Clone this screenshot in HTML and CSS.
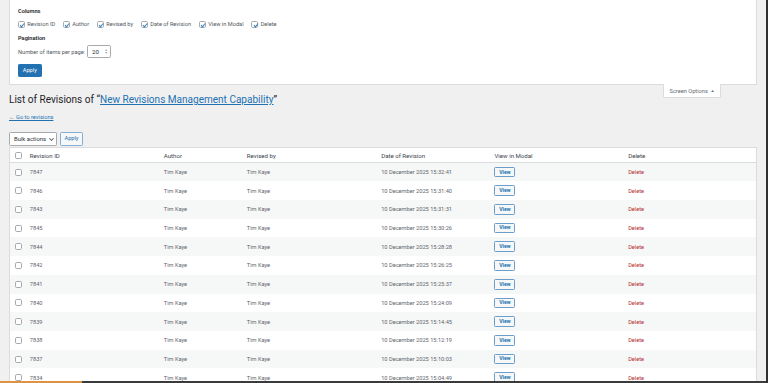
FILE: index.html
```html
<!DOCTYPE html>
<html lang="en">
<head>
<meta charset="utf-8">
<title>Revisions</title>
<link rel="stylesheet" href="styles.css">
</head>
<body>
<div class="frame">
  <div class="viewport">
    <div class="screen-meta">
      <div class="prefs-title">Columns</div>
      <div class="prefs-cols">
        <label class="pref"><span class="cb"><svg viewBox="0 0 20 20"><path d="M14.83 4.89l1.34.94-5.81 8.38H9.02L5.78 9.67l1.34-1.25 2.57 2.4z" fill="#3582c4"/></svg></span>Revision ID</label>
        <label class="pref"><span class="cb"><svg viewBox="0 0 20 20"><path d="M14.83 4.89l1.34.94-5.81 8.38H9.02L5.78 9.67l1.34-1.25 2.57 2.4z" fill="#3582c4"/></svg></span>Author</label>
        <label class="pref"><span class="cb"><svg viewBox="0 0 20 20"><path d="M14.83 4.89l1.34.94-5.81 8.38H9.02L5.78 9.67l1.34-1.25 2.57 2.4z" fill="#3582c4"/></svg></span>Revised by</label>
        <label class="pref"><span class="cb"><svg viewBox="0 0 20 20"><path d="M14.83 4.89l1.34.94-5.81 8.38H9.02L5.78 9.67l1.34-1.25 2.57 2.4z" fill="#3582c4"/></svg></span>Date of Revision</label>
        <label class="pref"><span class="cb"><svg viewBox="0 0 20 20"><path d="M14.83 4.89l1.34.94-5.81 8.38H9.02L5.78 9.67l1.34-1.25 2.57 2.4z" fill="#3582c4"/></svg></span>View in Modal</label>
        <label class="pref"><span class="cb"><svg viewBox="0 0 20 20"><path d="M14.83 4.89l1.34.94-5.81 8.38H9.02L5.78 9.67l1.34-1.25 2.57 2.4z" fill="#3582c4"/></svg></span>Delete</label>
      </div>
      <div class="prefs-title pag">Pagination</div>
      <div class="per-page">
        <span>Number of items per page:</span>
        <span class="num">20<svg class="spin" viewBox="0 0 10 16"><path d="M2.5 6.5L5 3l2.5 3.5z M2.5 9.5L5 13l2.5-3.5z" fill="#8a8a8a"/></svg></span>
      </div>
      <button class="btn btn-primary">Apply</button>
    </div>
    <div class="meta-links">
      <span class="show-settings">Screen Options<svg viewBox="0 0 8 5"><path d="M0 5L4 0l4 5z" fill="#787c82"/></svg></span>
    </div>
    <div class="wrap">
      <h1 class="title">List of Revisions of “<a href="#">New Revisions Management Capability</a>”</h1>
      <p class="back"><a href="#">← Go to revisions</a></p>
      <div class="tablenav">
        <span class="select">Bulk actions<svg viewBox="0 0 20 20"><path d="M5 6l5 5 5-5 2 1-7 7-7-7 2-1z" fill="#555"/></svg></span>
        <button class="btn btn-secondary">Apply</button>
      </div>
      <table class="list">
        <colgroup>
          <col class="c-check"><col class="c-id"><col class="c-author"><col class="c-rev"><col class="c-date"><col class="c-view"><col>
        </colgroup>
        <thead>
          <tr><th class="check-col"><span class="cb"></span></th><th>Revision ID</th><th>Author</th><th>Revised by</th><th>Date of Revision</th><th>View in Modal</th><th>Delete</th></tr>
        </thead>
        <tbody>
          <tr><td class="check-col"><span class="cb"></span></td><td>7847</td><td>Tim Kaye</td><td>Tim Kaye</td><td>10 December 2025 15:32:41</td><td><button class="btn btn-view">View</button></td><td><a class="del" href="#">Delete</a></td></tr>
          <tr><td class="check-col"><span class="cb"></span></td><td>7846</td><td>Tim Kaye</td><td>Tim Kaye</td><td>10 December 2025 15:31:40</td><td><button class="btn btn-view">View</button></td><td><a class="del" href="#">Delete</a></td></tr>
          <tr><td class="check-col"><span class="cb"></span></td><td>7843</td><td>Tim Kaye</td><td>Tim Kaye</td><td>10 December 2025 15:31:31</td><td><button class="btn btn-view">View</button></td><td><a class="del" href="#">Delete</a></td></tr>
          <tr><td class="check-col"><span class="cb"></span></td><td>7845</td><td>Tim Kaye</td><td>Tim Kaye</td><td>10 December 2025 15:30:26</td><td><button class="btn btn-view">View</button></td><td><a class="del" href="#">Delete</a></td></tr>
          <tr><td class="check-col"><span class="cb"></span></td><td>7844</td><td>Tim Kaye</td><td>Tim Kaye</td><td>10 December 2025 15:28:28</td><td><button class="btn btn-view">View</button></td><td><a class="del" href="#">Delete</a></td></tr>
          <tr><td class="check-col"><span class="cb"></span></td><td>7842</td><td>Tim Kaye</td><td>Tim Kaye</td><td>10 December 2025 15:26:25</td><td><button class="btn btn-view">View</button></td><td><a class="del" href="#">Delete</a></td></tr>
          <tr><td class="check-col"><span class="cb"></span></td><td>7841</td><td>Tim Kaye</td><td>Tim Kaye</td><td>10 December 2025 15:25:37</td><td><button class="btn btn-view">View</button></td><td><a class="del" href="#">Delete</a></td></tr>
          <tr><td class="check-col"><span class="cb"></span></td><td>7840</td><td>Tim Kaye</td><td>Tim Kaye</td><td>10 December 2025 15:24:09</td><td><button class="btn btn-view">View</button></td><td><a class="del" href="#">Delete</a></td></tr>
          <tr><td class="check-col"><span class="cb"></span></td><td>7839</td><td>Tim Kaye</td><td>Tim Kaye</td><td>10 December 2025 15:14:45</td><td><button class="btn btn-view">View</button></td><td><a class="del" href="#">Delete</a></td></tr>
          <tr><td class="check-col"><span class="cb"></span></td><td>7838</td><td>Tim Kaye</td><td>Tim Kaye</td><td>10 December 2025 15:12:19</td><td><button class="btn btn-view">View</button></td><td><a class="del" href="#">Delete</a></td></tr>
          <tr><td class="check-col"><span class="cb"></span></td><td>7837</td><td>Tim Kaye</td><td>Tim Kaye</td><td>10 December 2025 15:10:03</td><td><button class="btn btn-view">View</button></td><td><a class="del" href="#">Delete</a></td></tr>
          <tr><td class="check-col"><span class="cb"></span></td><td>7834</td><td>Tim Kaye</td><td>Tim Kaye</td><td>10 December 2025 15:04:49</td><td><button class="btn btn-view">View</button></td><td><a class="del" href="#">Delete</a></td></tr>
        </tbody>
      </table>
    </div>
  </div>
  <div class="taskbar"><span class="taskbar-progress"></span></div>
</div>
</body>
</html>
```
FILE: styles.css
```css
* { box-sizing: border-box; }
html, body { margin: 0; padding: 0; }
body {
  background: #f0f0f1;
  font-family: Roboto, "Noto Sans", "Liberation Sans", sans-serif;
  color: #3c434a;
}
button { margin: 0; font-family: inherit; cursor: pointer; }

.frame {
  width: 768px;
  height: 383px;
  display: flex;
  flex-direction: column;
  border-right: 2px solid #303030;
  overflow: hidden;
}
.viewport { flex: 1; min-height: 0; overflow: hidden; padding-left: 9px; }
.taskbar { flex: 0 0 2px; display: flex; background: #3a3a3a; }
.taskbar-progress { width: 82px; background: #e0923f; }

/* Screen options panel */
.screen-meta {
  height: 85px;
  margin-right: 9px;
  padding: 6.5px 8px 0;
  background: #fff;
  border: 1px solid #dcdcde;
  border-top: 0;
}
.prefs-title { font-size: 5.67px; font-weight: 600; line-height: 8.7px; color: #1d2327; }
.prefs-cols { display: flex; align-items: center; height: 13.1px; margin-top: 2.6px; }
.pref { display: flex; align-items: center; margin-right: 7.8px; font-size: 5.67px; color: #50575e; }
.cb {
  display: flex;
  flex: 0 0 7px;
  width: 7px;
  height: 7px;
  border: 1px solid #a7aaad;
  border-radius: 1.75px;
  background: #fff;
}
.pref .cb { margin-right: 2.3px; }
.cb svg { flex: 0 0 9.2px; width: 9.2px; height: 9.2px; margin: -1.3px 0 0 -1.75px; }
.pag { margin-top: 3px; }
.per-page { display: flex; align-items: center; height: 13.5px; margin-top: 2.4px; font-size: 5.67px; color: #50575e; }
.num {
  display: flex;
  align-items: center;
  width: 24.7px;
  height: 13.5px;
  margin-left: 1.7px;
  padding: 0 1.6px 0 4.3px;
  background: #fff;
  border: 1px solid #a7aaad;
  border-radius: 1.75px;
  font-size: 6.1px;
  color: #2c3338;
}
.spin { display: block; margin-left: auto; width: 4.4px; height: 7px; }

.btn {
  display: flex;
  align-items: center;
  justify-content: center;
  padding: 0;
  border-radius: 1.3px;
  font-size: 5.67px;
  line-height: 1;
}
.btn-primary {
  width: 23.6px;
  height: 13.1px;
  margin-top: 5.7px;
  background: #2271b1;
  border: 1px solid #2271b1;
  color: #fff;
}

/* Screen options tab */
.meta-links { float: right; margin: -1px 45px 0 0; }
.show-settings {
  display: flex;
  align-items: center;
  gap: 3.3px;
  height: 13.7px;
  padding: 1px 5.5px 0;
  background: #fff;
  border: 1px solid #dcdcde;
  border-top: 0;
  border-radius: 0 0 1.75px 1.75px;
  font-size: 5.67px;
  color: #646970;
}
.show-settings svg { width: 3.4px; height: 2.2px; }

/* Main */
.wrap { margin: 4.4px 9px 0 0; }
.title {
  margin: 0;
  padding: 3.9px 0 1.75px;
  font-size: 10.04px;
  font-weight: 400;
  line-height: 13.05px;
  color: #1d2327;
}
.title a { color: #2271b1; }
.back { margin: 5.2px 0 0; font-size: 5.67px; line-height: 8.3px; }
.back a { color: #2271b1; }

.tablenav { display: flex; align-items: center; gap: 3px; height: 13.6px; margin-top: 10.7px; }
.select {
  display: flex;
  align-items: center;
  width: 47.7px;
  height: 13.6px;
  padding-left: 4px;
  background: #fff;
  border: 1px solid #a7aaad;
  border-radius: 1.3px;
  font-size: 5.9px;
  color: #2c3338;
}
.select svg { width: 7px; height: 7px; margin-left: 2.3px; }
.btn-secondary {
  width: 23.6px;
  height: 13.6px;
  background: #f6f7f7;
  border: 1px solid #86aed3;
  color: #2271b1;
}

/* Table */
.list {
  width: 100%;
  margin-top: 1.4px;
  border-collapse: collapse;
  table-layout: fixed;
  background: #fff;
  border: 1px solid #dcdcde;
}
.c-check { width: 15.9px; }
.c-id { width: 134px; }
.c-author { width: 83px; }
.c-rev { width: 134.4px; }
.c-date { width: 113.3px; }
.c-view { width: 133.7px; }
.list th {
  height: 14.8px;
  padding: 0 4.4px;
  border-bottom: 1px solid #dcdcde;
  font-size: 6.1px;
  font-weight: 400;
  color: #3c434a;
  text-align: left;
  white-space: nowrap;
}
.list td {
  height: 18.73px;
  padding: 0 4.4px;
  font-size: 5.67px;
  color: #5f656b;
  white-space: nowrap;
}
.list tbody tr:nth-child(odd) { background: #f6f7f7; }
.list .check-col { padding: 0 0 0 5px; }
.del { color: #b32d2e; text-decoration: none; }
.btn-view {
  width: 20.7px;
  height: 10.6px;
  background: #f6f7f7;
  border: 1px solid #6d9ecb;
  color: #2271b1;
  font-size: 5.2px;
  font-weight: 700;
}
```
